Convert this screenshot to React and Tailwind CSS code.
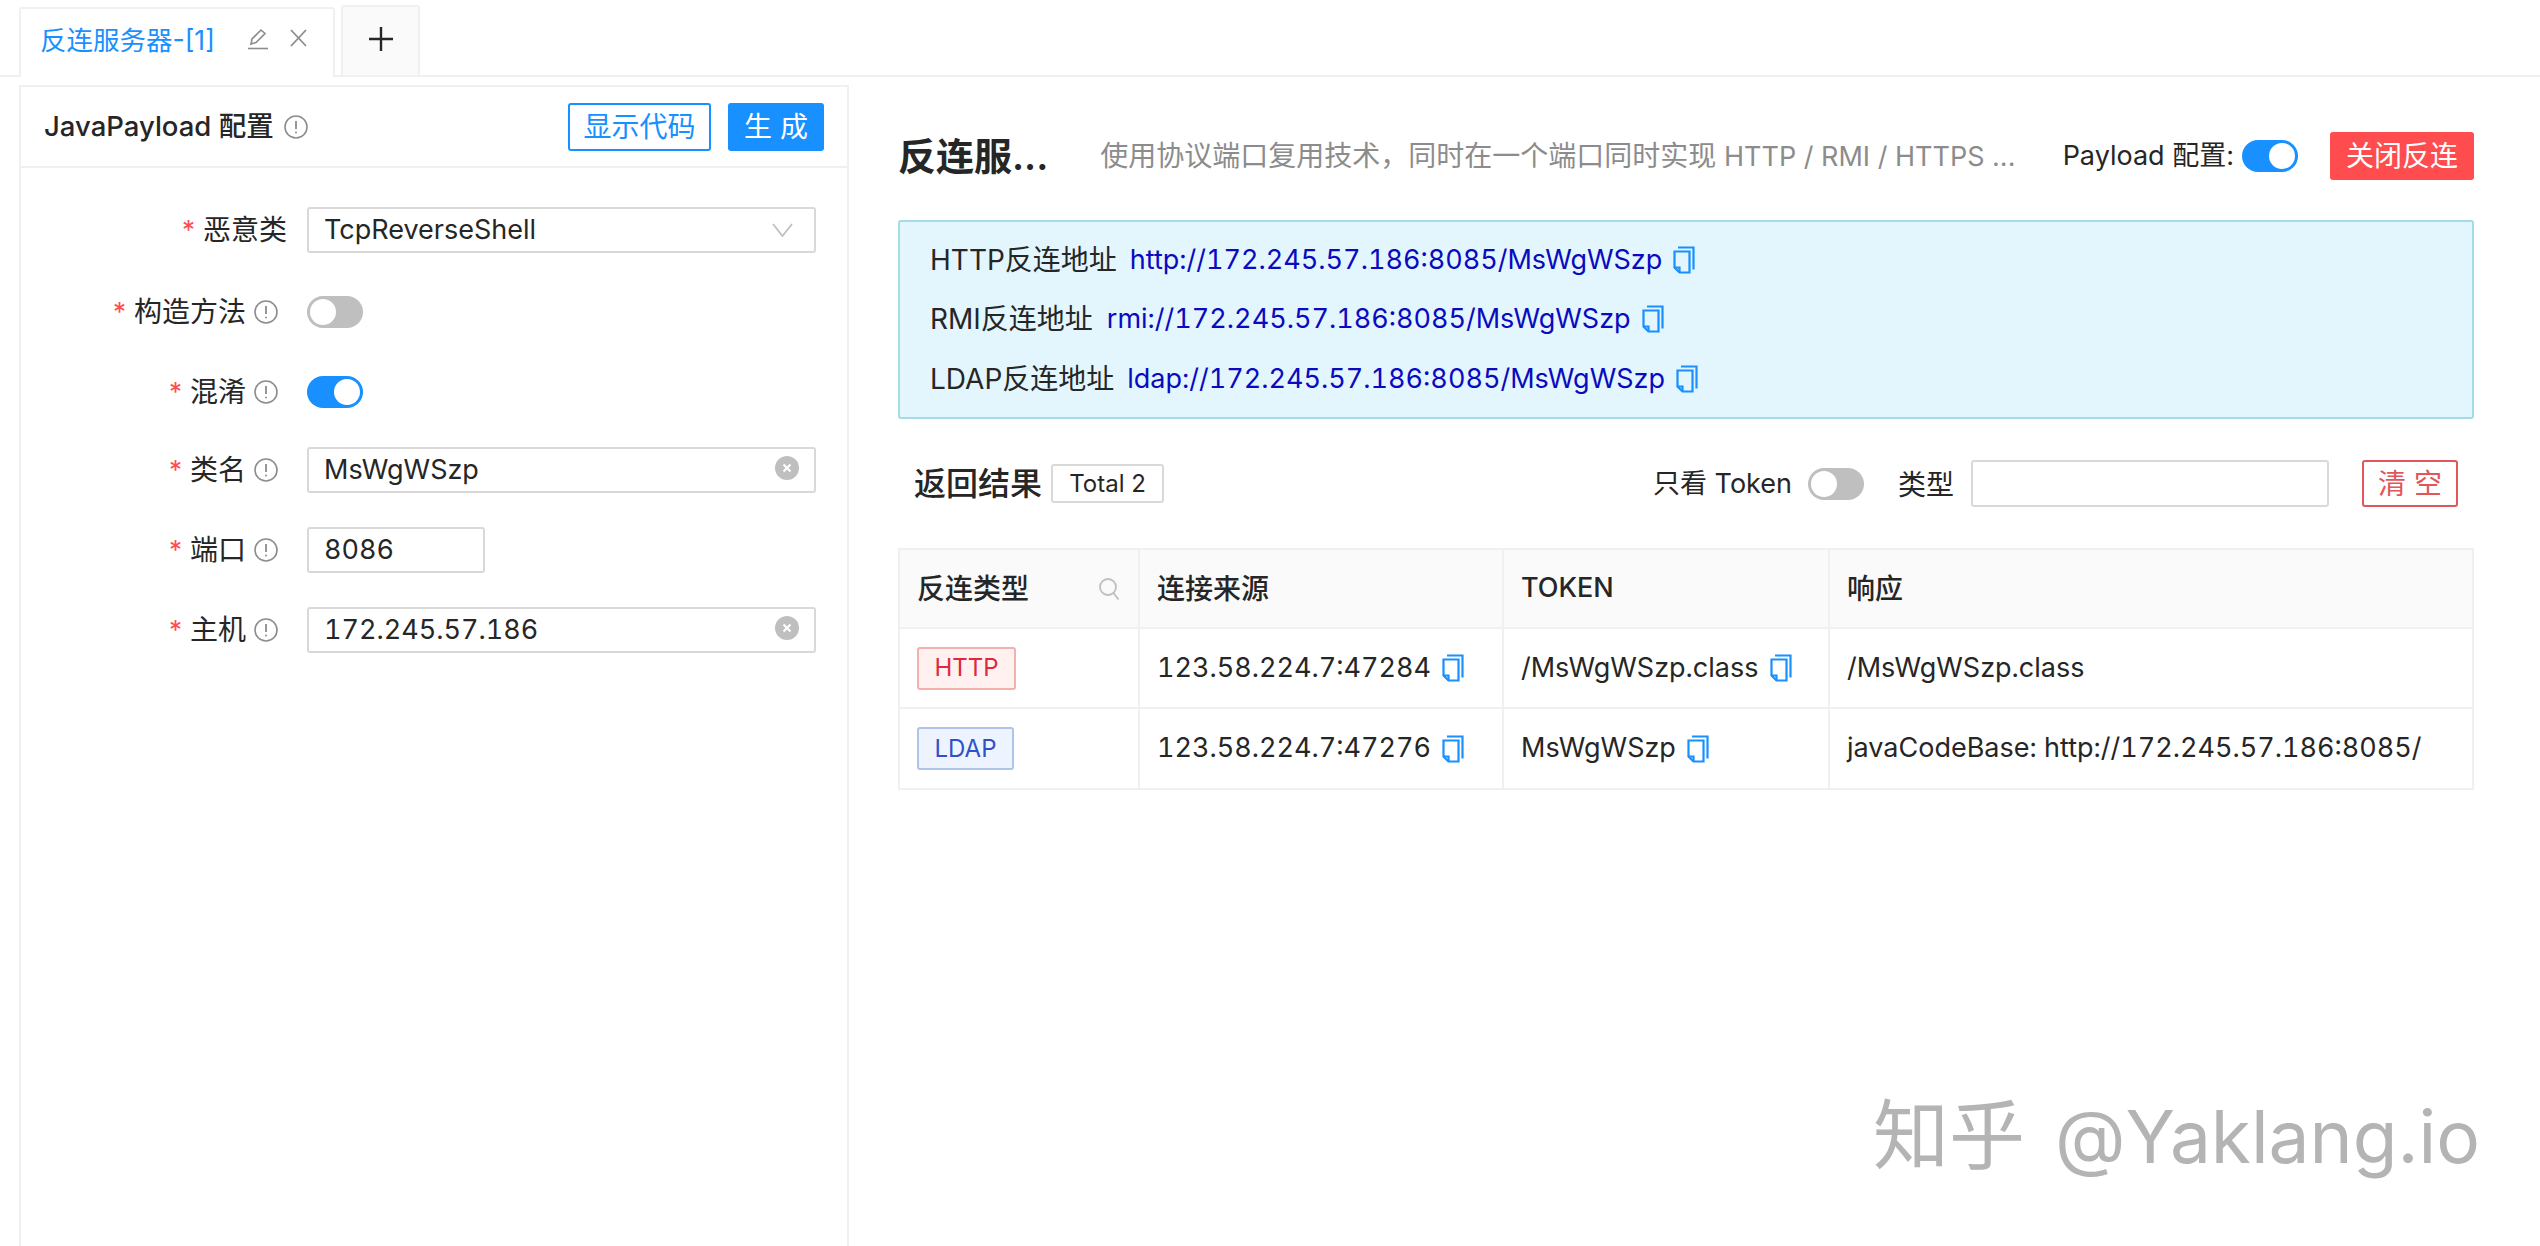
import React from "react";

const rows = [
  { label: "HTTP反连地址", scheme: "http://", gap: "ml-[13px]" },
  { label: "RMI反连地址", scheme: "rmi://", gap: "ml-[14px]" },
  { label: "LDAP反连地址", scheme: "ldap://", gap: "ml-[13px]" },
];

function CopyIcon({ className = "" }) {
  return (
    <svg width="22" height="28" viewBox="0 0 22 28" fill="none" stroke="#1890ff" strokeWidth="2.2" className={"shrink-0 " + className}>
      <path d="M5 1.5H20.5V23.5" />
      <path d="M1.5 5.5H16.5V26.5H6.5L1.5 21.5Z" />
      <path d="M1.5 21.5H6.5V26.5" />
    </svg>
  );
}

function HelpIcon() {
  return (
    <svg width="24" height="24" viewBox="0 0 24 24" fill="none" stroke="#8c8c8c" className="shrink-0">
      <circle cx="12" cy="12" r="11" strokeWidth="1.6" />
      <path d="M12 6V14" strokeWidth="1.8" />
      <circle cx="12" cy="17.5" r="1" fill="#8c8c8c" stroke="none" />
    </svg>
  );
}

function ClearIcon() {
  return (
    <svg width="24" height="24" viewBox="0 0 24 24" className="absolute right-[15px] top-[7px]">
      <circle cx="12" cy="12" r="12" fill="#bfbfbf" />
      <path d="M8.5 8.5L15.5 15.5M15.5 8.5L8.5 15.5" stroke="#fff" strokeWidth="2" />
    </svg>
  );
}

function Toggle({ on }) {
  return (
    <div className={"flex h-[32px] w-[56px] shrink-0 items-center rounded-full p-[3px] " + (on ? "justify-end bg-[#1890ff]" : "justify-start bg-[#bfbfbf]")}>
      <div className="size-[26px] rounded-full bg-white" />
    </div>
  );
}

function FormRow({ label, help, className, children }) {
  return (
    <div className={"flex items-center " + className}>
      <div className="flex w-[266px] shrink-0 items-center justify-end text-[28px]">
        <span className="mr-[8px] text-[26px] leading-none text-[#ff4d4f]">*</span>
        <span>{label}</span>
        {help && <span className="ml-[8px] mr-[9px]"><HelpIcon /></span>}
      </div>
      <div className="ml-[20px] flex-1">{children}</div>
    </div>
  );
}

function Input({ value, className = "w-[509px]", clear, children }) {
  return (
    <div className={"relative flex h-[46px] items-center rounded-[3px] border-2 border-[#d9d9d9] bg-white pl-[15px] tabular-nums " + className}>
      {value}
      {clear && <ClearIcon />}
      {children}
    </div>
  );
}

function Tag({ className, children }) {
  return (
    <span className={"flex h-[43px] items-center justify-center rounded-[3px] border-2 text-[24px] " + className}>{children}</span>
  );
}

export default function App() {
  return (
    <div className="relative h-[1246px] w-full overflow-hidden bg-white font-['Inter','Noto_Sans_CJK_SC',sans-serif] text-[27px] text-[#262626]">
      {/* tabs */}
      <div className="flex h-[77px] items-end gap-[6px] border-b-2 border-[#f0f0f0] pl-[19px]">
        <div className="-mb-[2px] flex h-[70px] w-[316px] items-center rounded-t-[3px] border-2 border-b-0 border-[#f0f0f0] bg-white pb-[4px] pl-[19px] text-[26.5px] text-[#1890ff]">
          <span className="w-[207px] whitespace-nowrap">反连服务器-[1]</span>
          <svg width="22" height="22" viewBox="0 0 22 22" fill="none" stroke="#8c8c8c" strokeWidth="1.6" className="-mt-[4px]">
            <path d="M1 20.5H21" />
            <path d="M4 16L5 11L14 2L18 5.5L9 14.5Z" />
          </svg>
          <svg width="17" height="18" viewBox="0 0 17 18" fill="none" stroke="#8c8c8c" strokeWidth="1.8" className="-mt-[6px] ml-[21px]">
            <path d="M1 1L16 17M16 1L1 17" />
          </svg>
        </div>
        <div className="flex h-[70px] w-[79px] items-center justify-center rounded-t-[3px] border-2 border-b-0 border-[#f0f0f0] bg-[#fafafa] pb-[4px]">
          <svg width="24" height="24" viewBox="0 0 24 24" stroke="#262626" strokeWidth="2.4">
            <path d="M12 0V24M0 12H24" />
          </svg>
        </div>
      </div>

      <div className="flex">
        {/* payload form */}
        <div className="ml-[19px] mt-[8px] h-[1170px] w-[830px] shrink-0 border-2 border-[#f0f0f0]">
          <div className="flex h-[81px] items-center border-b-2 border-[#f0f0f0] pl-[23px] pr-[23px]">
            <span className="text-[27.5px] font-medium">JavaPayload 配置</span>
            <span className="ml-[10px]"><HelpIcon /></span>
            <button className="ml-auto flex h-[48px] w-[143px] items-center justify-center rounded-[3px] border-2 border-[#1890ff] text-[28px] text-[#1890ff]">显示代码</button>
            <button className="ml-[17px] flex h-[48px] w-[96px] items-center justify-center rounded-[3px] bg-[#1890ff] text-[28px] text-white">生 成</button>
          </div>
          <div className="flex flex-col pt-[39px]">
            <FormRow label="恶意类" className="h-[46px]">
              <Input value="TcpReverseShell">
                <svg width="21" height="14" viewBox="0 0 21 14" fill="none" stroke="#bfbfbf" strokeWidth="1.8" className="absolute right-[21px] top-[14px]">
                  <path d="M1 1L10.5 13L20 1" />
                </svg>
              </Input>
            </FormRow>
            <FormRow label="构造方法" help className="mt-[43px] h-[32px]"><Toggle /></FormRow>
            <FormRow label="混淆" help className="mt-[48px] h-[32px]"><Toggle on /></FormRow>
            <FormRow label="类名" help className="mt-[39px] h-[46px]"><Input value="MsWgWSzp" clear /></FormRow>
            <FormRow label="端口" help className="mt-[34px] h-[46px]"><Input value="8086" className="w-[178px]" /></FormRow>
            <FormRow label="主机" help className="mt-[34px] h-[46px]"><Input value="172.245.57.186" clear /></FormRow>
          </div>
        </div>

        {/* reverse server */}
        <div className="ml-[49px] mr-[66px] flex-1 pt-[55px]">
          <div className="flex h-[48px] items-center">
            <span className="text-[38px] font-semibold">反连服...</span>
            <span className="ml-[52px] text-[#8c8c8c]"><span className="text-[28px]">使用协议端口复用技术，同时在一个端口同时实现</span> HTTP / RMI / HTTPS ...</span>
            <span className="ml-auto">Payload 配置:</span>
            <span className="ml-[8px]"><Toggle on /></span>
            <button className="ml-[32px] flex h-[48px] w-[144px] items-center justify-center rounded-[3px] bg-[#ff4d4f] text-[28px] text-white">关闭反连</button>
          </div>

          <div className="mt-[40px] flex h-[199px] flex-col rounded-[3px] border-2 border-[#a3dbe8] bg-[#e3f6fd] px-[30px] pt-[8px]">
            {rows.map((row) => (
              <div key={row.label} className="flex h-[59.5px] items-center">
                <span className="text-[28px]">{row.label}</span>
                <span className={"text-[#0a0ac0] tabular-nums " + row.gap}>
                  {row.scheme}172.245.57.186:8085/MsWgWSzp
                </span>
                <CopyIcon className="ml-[11px]" />
              </div>
            ))}
          </div>

          <div className="mt-[41px] flex h-[47px] items-center pl-[16px] pr-[16px]">
            <span className="text-[32px] font-medium">返回结果</span>
            <span className="ml-[9px] flex h-[39px] w-[113px] items-center justify-center rounded-[3px] border-2 border-[#d9d9d9] text-[24px]">Total 2</span>
            <span className="ml-auto pt-[2px]">只看 Token</span>
            <span className="ml-[16px]"><Toggle /></span>
            <span className="ml-[34px] pt-[2px] text-[28px]">类型</span>
            <Input value="" className="ml-[17px] h-[47px] w-[358px]" />
            <button className="ml-[33px] flex h-[47px] w-[96px] items-center justify-center rounded-[3px] border-2 border-[#e0565b] text-[28px] text-[#e0565b]">清 空</button>
          </div>

          <table className="mt-[41px] w-full table-fixed border-collapse border-2 border-[#f0f0f0] tabular-nums">
            <colgroup>
              <col className="w-[240px]" />
              <col className="w-[364px]" />
              <col className="w-[326px]" />
              <col />
            </colgroup>
            <thead>
              <tr className="h-[79px] bg-[#fafafa] text-left text-[28px]">
                <th className="border-2 border-[#f0f0f0] px-[17px] font-medium">
                  <div className="flex items-center justify-between pr-[1px]">
                    反连类型
                    <svg width="22" height="24" viewBox="0 0 22 24" fill="none" stroke="#bfbfbf" strokeWidth="1.8">
                      <circle cx="10" cy="10" r="8" />
                      <path d="M15.5 16L20.5 22.5" />
                    </svg>
                  </div>
                </th>
                <th className="border-2 border-[#f0f0f0] px-[17px] font-medium">连接来源</th>
                <th className="border-2 border-[#f0f0f0] px-[17px] text-[27px] font-medium">TOKEN</th>
                <th className="border-2 border-[#f0f0f0] px-[17px] font-medium">响应</th>
              </tr>
            </thead>
            <tbody>
              <tr className="h-[80px]">
                <td className="border-2 border-[#f0f0f0] px-[17px]">
                  <Tag className="w-[99px] border-[#f5b0ae] bg-[#fff1f0] text-[#e0283c]">HTTP</Tag>
                </td>
                <td className="border-2 border-[#f0f0f0] px-[17px]">
                  <div className="flex items-center gap-[11px]">123.58.224.7:47284<CopyIcon /></div>
                </td>
                <td className="border-2 border-[#f0f0f0] px-[17px]">
                  <div className="flex items-center gap-[11px]">/MsWgWSzp.class<CopyIcon /></div>
                </td>
                <td className="border-2 border-[#f0f0f0] px-[17px]">/MsWgWSzp.class</td>
              </tr>
              <tr className="h-[81px]">
                <td className="border-2 border-[#f0f0f0] px-[17px]">
                  <Tag className="w-[97px] border-[#b0c4ea] bg-[#eef4ff] text-[#3050c8]">LDAP</Tag>
                </td>
                <td className="border-2 border-[#f0f0f0] px-[17px]">
                  <div className="flex items-center gap-[11px]">123.58.224.7:47276<CopyIcon /></div>
                </td>
                <td className="border-2 border-[#f0f0f0] px-[17px]">
                  <div className="flex items-center gap-[11px]">MsWgWSzp<CopyIcon /></div>
                </td>
                <td className="border-2 border-[#f0f0f0] px-[17px]">javaCodeBase: http://172.245.57.186:8085/</td>
              </tr>
            </tbody>
          </table>
        </div>
      </div>

      {/* watermark */}
      <div className="absolute left-[1873px] top-[1090px] whitespace-nowrap text-[76px] leading-[90px] text-[#b4b4b4]">知乎<span className="ml-[30px] text-[73px]">@Yaklang.io</span></div>
    </div>
  );
}
